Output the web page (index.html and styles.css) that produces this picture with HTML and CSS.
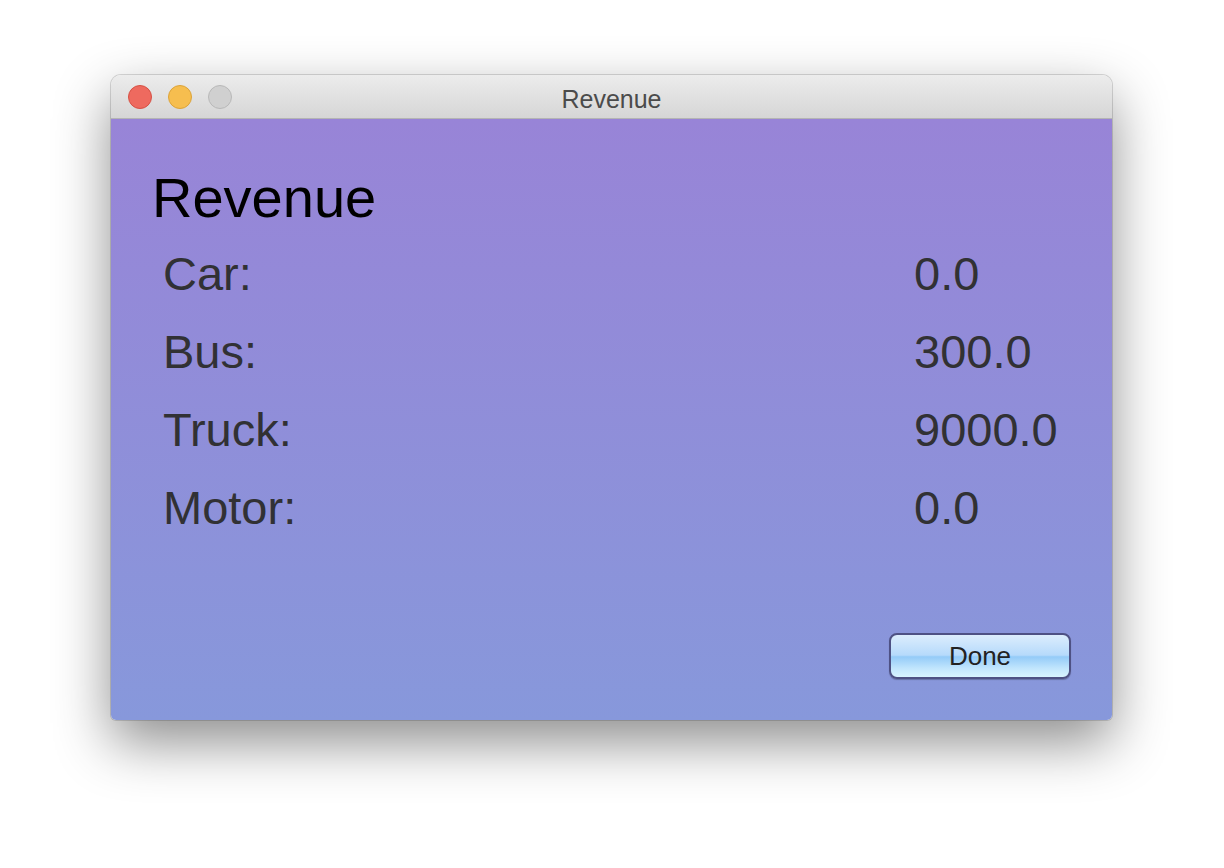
FILE: index.html
```html
<!DOCTYPE html>
<html>
<head>
<meta charset="utf-8">
<link rel="stylesheet" href="styles.css">
</head>
<body>
<div class="window">
  <div class="titlebar">
    <div class="lights">
      <span class="light red"></span>
      <span class="light yellow"></span>
      <span class="light gray"></span>
    </div>
    <div class="title">Revenue</div>
  </div>
  <div class="content">
    <h1 class="heading">Revenue</h1>
    <div class="rows">
      <div class="label">Car:</div><div class="value">0.0</div>
      <div class="label">Bus:</div><div class="value">300.0</div>
      <div class="label">Truck:</div><div class="value">9000.0</div>
      <div class="label">Motor:</div><div class="value">0.0</div>
    </div>
    <div class="actions">
      <button class="done">Done</button>
    </div>
  </div>
</div>
</body>
</html>
```
FILE: styles.css
```css
html, body {
  margin: 0;
  padding: 0;
  background: #ffffff;
  width: 1224px;
  height: 868px;
  overflow: hidden;
}
body {
  padding: 75px 0 0 111px;
  box-sizing: border-box;
  font-family: "Liberation Sans", Arial, sans-serif;
}
.window {
  width: 1001px;
  height: 645px;
  border-radius: 10px 10px 5px 5px;
  overflow: hidden;
  display: flex;
  flex-direction: column;
  box-shadow: 0 22px 55px rgba(0,0,0,0.45), 0 0 0 1px rgba(0,0,0,0.14);
}
.titlebar {
  height: 43px;
  flex: none;
  background: linear-gradient(#ececec, #d6d6d6);
  border-bottom: 1px solid #b4b4b4;
  position: relative;
  display: flex;
  align-items: center;
  justify-content: center;
}
.lights {
  position: absolute;
  left: 17px;
  top: 10px;
  display: flex;
  gap: 16px;
}
.light {
  width: 24px;
  height: 24px;
  border-radius: 50%;
  display: block;
  box-sizing: border-box;
}
.red { background: #ee6a5f; border: 1px solid #d55145; }
.yellow { background: #f6be4f; border: 1px solid #dba33a; }
.gray { background: #d0d0d0; border: 1px solid #b8b8b8; }
.title {
  font-size: 25px;
  color: #4b4b4b;
  margin-top: 5px;
}
.content {
  flex: 1;
  background: linear-gradient(#9884d7, #8798db);
  display: flex;
  flex-direction: column;
  padding: 51px 41px 41px 41px;
}
.heading {
  margin: 0;
  font-weight: normal;
  font-size: 56px;
  line-height: 56px;
  color: #000;
}
.rows {
  margin-top: 9px;
  padding-left: 11px;
  display: grid;
  grid-template-columns: 751px auto;
  font-size: 47px;
  line-height: 78px;
  color: #313134;
}
.actions {
  margin-top: auto;
  display: flex;
  justify-content: flex-end;
}
.done {
  width: 182px;
  height: 46px;
  border-radius: 8px;
  border: 2px solid #4e5184;
  background: linear-gradient(#dcedfd 0%, #b6dafb 48%, #94cbf8 52%, #c2e6fd 80%, #d8f4ff 100%);
  font-family: "Liberation Sans", Arial, sans-serif;
  font-size: 26px;
  color: #222;
  padding: 0;
  box-shadow: 0 1px 1px rgba(0,0,0,0.25);
}
```
